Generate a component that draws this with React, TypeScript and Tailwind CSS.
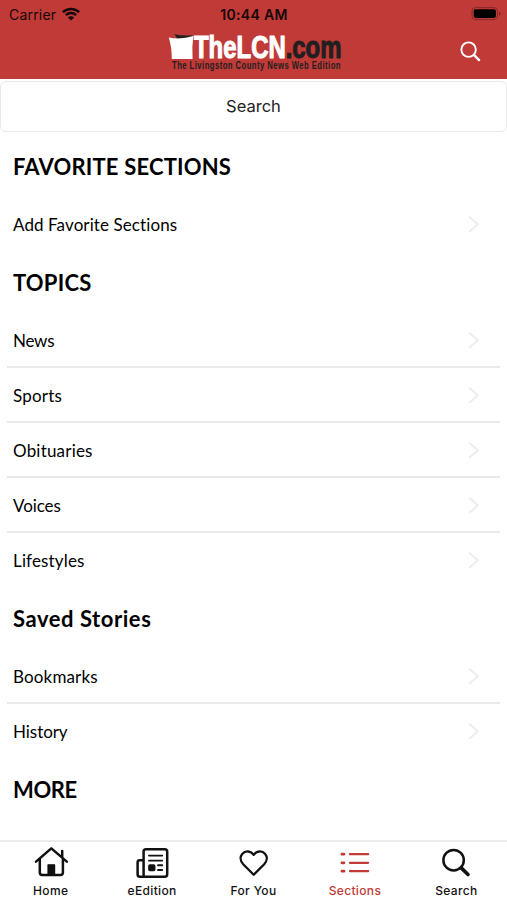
import type { ReactNode } from 'react';
import clsx from 'clsx';

type Item = { label: string; tracking: string };
type Group = { title: string; tracking: string; items: Item[] };

const groups: Group[] = [
  {
    title: 'FAVORITE SECTIONS',
    tracking: 'tracking-[0.18px]',
    items: [{ label: 'Add Favorite Sections', tracking: 'tracking-[0.1px]' }],
  },
  {
    title: 'TOPICS',
    tracking: 'tracking-[0.2px]',
    items: [
      { label: 'News', tracking: 'tracking-[-0.25px]' },
      { label: 'Sports', tracking: 'tracking-[0.2px]' },
      { label: 'Obituaries', tracking: 'tracking-[0.2px]' },
      { label: 'Voices', tracking: 'tracking-[-0.1px]' },
      { label: 'Lifestyles', tracking: 'tracking-[0.15px]' },
    ],
  },
  {
    title: 'Saved Stories',
    tracking: 'tracking-[0.55px]',
    items: [
      { label: 'Bookmarks', tracking: 'tracking-[0.15px]' },
      { label: 'History', tracking: 'tracking-[-0.05px]' },
    ],
  },
  { title: 'MORE', tracking: 'tracking-[-0.4px]', items: [] },
];

const Logo = () => (
  <svg className="h-[40px] w-[176px] overflow-visible" viewBox="168 32 176 40" aria-label="TheLCN.com">
    <path d="M174.5 34.3 Q184 36.2 192.5 35.2 L191 38.5 L177 38.5 Z" fill="#231f20" />
    <path d="M168.8 37.5 Q181 40 193.3 36 Q191.8 47 192.6 59 L171.8 59 Q171.8 47 168.8 37.5 Z" fill="#fff" />
    <g fontFamily="'Liberation Sans', sans-serif" fontWeight="700">
      <text x="194" y="58.3" fontSize="31" fill="#fff" stroke="#fff" strokeWidth="1.1" textLength="147.5" lengthAdjust="spacingAndGlyphs">
        TheLCN<tspan fill="#231f20" stroke="#231f20">.com</tspan>
      </text>
      <text x="172" y="68.6" fontSize="10" fill="#231f20" letterSpacing="0.6" textLength="169" lengthAdjust="spacingAndGlyphs">The Livingston County News Web Edition</text>
    </g>
  </svg>
);

const Wifi = () => (
  <svg className="ml-[6px] h-[14px] w-[18px]" viewBox="0 0 18 14">
    <g fill="none" stroke="#160606" strokeWidth="2.5">
      <path d="M0.9 5.2 A11.6 11.6 0 0 1 17.1 5.2" />
      <path d="M3.9 8.2 A7.3 7.3 0 0 1 14.1 8.2" />
    </g>
    <path d="M9 13.6 L5.9 10.5 A4.4 4.4 0 0 1 12.1 10.5 Z" fill="#160606" />
  </svg>
);

const Battery = () => (
  <svg className="h-[14px] w-[31px]" viewBox="0 0 31 14">
    <rect x="1" y="0.6" width="25.5" height="12" rx="3.5" fill="none" stroke="#8a2825" />
    <rect x="2.7" y="2.3" width="22.2" height="8.6" rx="1.8" fill="#000" />
    <path d="M28 4.7 Q30 5.1 30 6.7 Q30 8.3 28 8.7 Z" fill="#8a2825" />
  </svg>
);

const Chevron = () => (
  <svg className="h-[18px] w-[12px]" viewBox="0 0 12 18" fill="none" stroke="#ededed" strokeWidth="2">
    <path d="M1.2 1.8 L9.8 9.3 L1.2 16.8" />
  </svg>
);

const Tab = ({ label, active, children }: { label: string; active?: boolean; children: ReactNode }) => (
  <div className={clsx('flex flex-1 flex-col items-center', active ? 'text-[#c03a37]' : 'text-[#111111]')}>
    <svg className="mt-[3px] h-[36px] w-[36px]" viewBox="0 0 36 36" fill="none" stroke="currentColor" strokeWidth="2.5" strokeLinecap="round" strokeLinejoin="round">
      {children}
    </svg>
    <span className="mt-[2px] font-['Inter',sans-serif] text-[12px] leading-[16px] font-medium tracking-[0.35px]">{label}</span>
  </div>
);

export default function App() {
  return (
    <div className="flex h-[900px] w-[507px] flex-col overflow-hidden bg-white font-['Lato',sans-serif] text-black">
      <header className="h-[79px] bg-[#c03a37]">
        <div className="grid h-[28px] grid-cols-3 items-center font-['Inter',sans-serif] text-[14px] text-[#160606]">
          <div className="flex items-center pl-[9px]">
            <span className="tracking-[0.2px]">Carrier</span>
            <Wifi />
          </div>
          <span className="pl-[1px] text-center font-semibold tracking-[0.3px]">10:44 AM</span>
          <div className="flex justify-end pr-[5px]">
            <Battery />
          </div>
        </div>
        <div className="flex items-start justify-between pt-[4px] pr-[26px]">
          <div className="w-[168px]" />
          <Logo />
          <div className="flex flex-1 justify-end">
            <svg className="mt-[9px] h-[21px] w-[21px]" viewBox="0 0 22 22" fill="none" stroke="#fff" strokeWidth="2" strokeLinecap="round">
              <circle cx="9" cy="9" r="7.6" />
              <path d="M14.8 14.8 L20 20" strokeWidth="2.5" />
            </svg>
          </div>
        </div>
      </header>

      <div className="mt-[2px] flex h-[51px] items-center justify-center rounded-[6px] border border-[#e9e9e9] font-['Inter',sans-serif] text-[16.5px] text-[#222222]">
        Search
      </div>

      <main className="min-h-0 flex-1 overflow-hidden pt-[4px]">
        {groups.map((group) => (
          <section key={group.title}>
            <h2 className={clsx('flex h-[61px] items-center pl-[13px] text-[22px] font-bold whitespace-nowrap', group.tracking)}>
              <span>{group.title}</span>
            </h2>
            <ul className="px-[7px]">
              {group.items.map((item, i) => (
                <li
                  key={item.label}
                  className={clsx(
                    'flex h-[55px] items-center justify-between border-b-2 pr-[20px] pl-[6px] text-[17px]',
                    i < group.items.length - 1 ? 'border-[#e9e9e9]' : 'border-transparent',
                  )}
                >
                  <span className={clsx('pt-[2px] [font-variant-ligatures:none]', item.tracking)}>{item.label}</span>
                  <Chevron />
                </li>
              ))}
            </ul>
          </section>
        ))}
      </main>

      <nav className="flex h-[60px] border-t-2 border-[#ececec] bg-white">
        <Tab label="Home">
          <path d="M3 16.6 L18.3 3.4 L33.8 16.6" />
          <path d="M6.8 14.6 V27.6 Q6.8 30 9.1 30 H27.6 Q29.9 30 29.9 27.6 V14.6 M29.2 6 V11.8" />
          <rect x="15" y="19.8" width="6.6" height="10" fill="currentColor" strokeWidth="1.2" />
        </Tab>
        <Tab label="eEdition">
          <path d="M9.6 30.5 V6.6 Q9.6 4.2 12 4.2 H30.7 Q33.2 4.2 33.2 6.6 V29.3 Q33.2 31.8 30.7 31.8 H6.2 Q3.6 31.8 3.6 29.2 V17.4 Q3.6 15.2 5.8 15.2 H9.2" />
          <path d="M15 10.6 H28.2 M15 15.6 H28.2 M24 20.3 H28.2 M24 25 H28.2" strokeWidth="1.9" />
          <rect x="15.4" y="20.5" width="4.8" height="4.6" rx="0.5" fill="currentColor" />
        </Tab>
        <Tab label="For You">
          <path d="M17.7 29.8 L7.2 19.2 C4 15.8 3.9 11.6 6.4 8.7 C9.6 5.2 15 6 17.7 9.7 C20.4 6 25.8 5.2 29 8.7 C31.5 11.6 31.4 15.8 28.2 19.2 Z" strokeWidth="2.3" />
        </Tab>
        <Tab label="Sections" active>
          <path d="M4.9 9.2 H7 M4.9 17.8 H7 M4.9 26.2 H7" strokeWidth="2.7" />
          <path d="M13 9.2 H31.1 M13 17.8 H31.1 M13 26.2 H31.1" strokeWidth="2.3" />
        </Tab>
        <Tab label="Search">
          <circle cx="15.6" cy="15.2" r="10.2" strokeWidth="2.5" />
          <path d="M23.2 22.9 L30 29.5" strokeWidth="3.6" />
        </Tab>
      </nav>
    </div>
  );
}
